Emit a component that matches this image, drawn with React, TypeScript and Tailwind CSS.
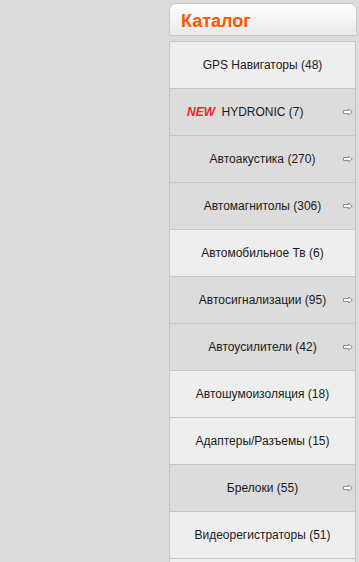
import React from "react";

type Item = { label: string; count?: number; sub?: boolean; isNew?: boolean };

const items: Item[] = [
  { label: "GPS Навигаторы", count: 48 },
  { label: "HYDRONIC", count: 7, sub: true, isNew: true },
  { label: "Автоакустика", count: 270, sub: true },
  { label: "Автомагнитолы", count: 306, sub: true },
  { label: "Автомобильное Тв", count: 6 },
  { label: "Автосигнализации", count: 95, sub: true },
  { label: "Автоусилители", count: 42, sub: true },
  { label: "Автошумоизоляция", count: 18 },
  { label: "Адаптеры/Разъемы", count: 15 },
  { label: "Брелоки", count: 55, sub: true },
  { label: "Видеорегистраторы", count: 51 },
  { label: "" }, // next row, only its top edge is in view
];

function Arrow() {
  return (
    <svg width="10" height="7" viewBox="0 0 10 7" className="absolute right-[2px] top-1/2 -translate-y-1/2">
      <path d="M0.5 2 H5.5 V0.5 L9.3 3.5 L5.5 6.5 V5 H0.5 Z" fill="#ffffff" stroke="#8c8c8c" strokeWidth="1" />
    </svg>
  );
}

export default function App() {
  return (
    <div className="h-[562px] w-full overflow-hidden bg-[#dcdcdc] pl-[169px] pr-[2px] pt-[3px] font-['Liberation_Sans',Arial,sans-serif]">
      {/* header */}
      <div className="flex h-[33px] items-center rounded-t-[7px] border border-[#c6c6c6] bg-gradient-to-b from-white to-[#e9e9e9] pl-[11px] pt-[2px]">
        <span className="text-[18px] font-bold leading-none text-[#ff5500]">Каталог</span>
      </div>

      {/* list */}
      <ul className="mt-[5px] mr-[1px] border-x border-t border-[#c6c6c6]">
        {items.map((it, i) => (
          <li
            key={i}
            className={`relative flex h-[47px] items-center justify-center border-b border-[#c6c6c6] text-[12px] text-[#1a1a1a] ${
              it.sub ? "bg-[#dcdcdc]" : "bg-[#eeeeee]"
            }`}
          >
            {it.isNew && (
              <span className="absolute left-[17px] top-1/2 -translate-y-1/2 text-[12px] font-bold italic text-[#f5222d]">
                NEW
              </span>
            )}
            {it.label && (
              <span>
                {it.label} ({it.count})
              </span>
            )}
            {it.sub && <Arrow />}
          </li>
        ))}
      </ul>
    </div>
  );
}
